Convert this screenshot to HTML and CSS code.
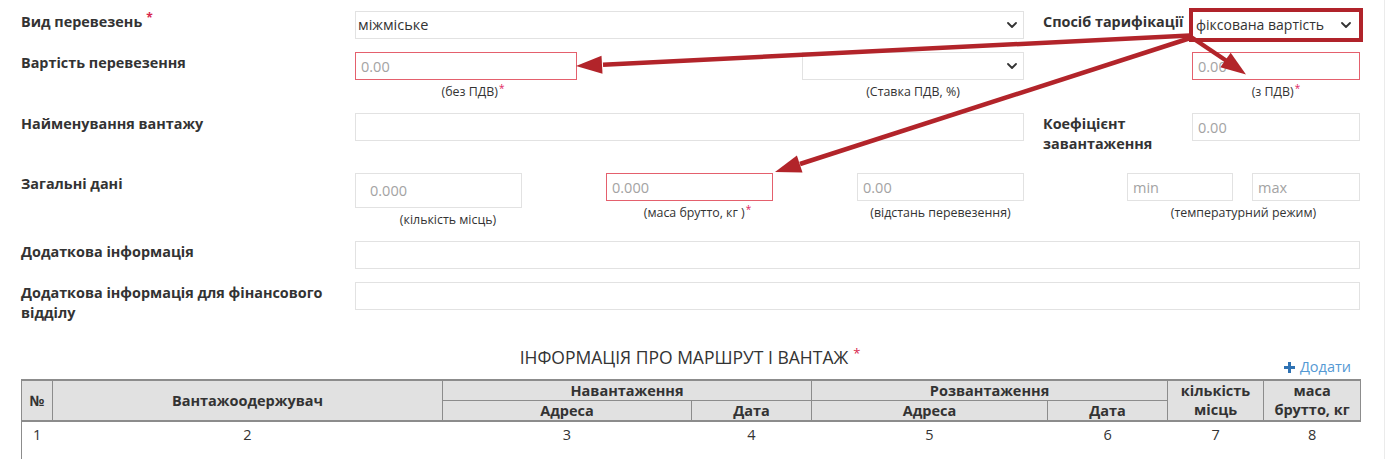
FILE: index.html
```html
<!DOCTYPE html>
<html lang="uk">
<head>
<meta charset="utf-8">
<title>Інформація про перевезення</title>
<link rel="stylesheet" href="styles.css">
</head>
<body>
<div class="page">
  <div class="form">
    <div class="row r1">
      <div class="label">Вид перевезень<span class="req">*</span></div>
      <div class="main">
        <div class="select w669"><span>міжміське</span><svg class="chev" viewBox="0 0 10 6" width="10" height="6"><polyline points="1,1 5,5 9,1"/></svg></div>
        <div class="label side">Спосіб тарифікації</div>
        <div class="select w168 marked"><span>фіксована вартість</span><svg class="chev" viewBox="0 0 10 6" width="10" height="6"><polyline points="1,1 5,5 9,1"/></svg></div>
      </div>
    </div>

    <div class="row r2">
      <div class="label">Вартість перевезення</div>
      <div class="main">
        <div class="field w222">
          <input class="ctl err" type="text" placeholder="0.00">
          <div class="cap shift14">(без ПДВ)<span class="creq">*</span></div>
        </div>
        <div class="field w222 ml225">
          <div class="select"><span></span><svg class="chev" viewBox="0 0 10 6" width="10" height="6"><polyline points="1,1 5,5 9,1"/></svg></div>
          <div class="cap">(Ставка ПДВ, %)</div>
        </div>
        <div class="field w168 ml168">
          <input class="ctl err" type="text" placeholder="0.00">
          <div class="cap">(з ПДВ)<span class="creq">*</span></div>
        </div>
      </div>
    </div>

    <div class="row r3">
      <div class="label">Найменування вантажу</div>
      <div class="main">
        <input class="ctl w669" type="text">
        <div class="label side">Коефіцієнт завантаження</div>
        <input class="ctl w168" type="text" placeholder="0.00">
      </div>
    </div>

    <div class="row r4">
      <div class="label">Загальні дані</div>
      <div class="main">
        <div class="field w186">
          <input class="ctl tall w167" type="text" placeholder="0.000">
          <div class="cap">(кількість місць)</div>
        </div>
        <div class="field w167 ml65">
          <input class="ctl err" type="text" placeholder="0.000">
          <div class="cap shift16">(маса брутто, кг )<span class="creq">*</span></div>
        </div>
        <div class="field w167 ml84">
          <input class="ctl" type="text" placeholder="0.00">
          <div class="cap">(відстань перевезення)</div>
        </div>
        <div class="field w233 ml103">
          <div class="pair">
            <input class="ctl w106" type="text" placeholder="min">
            <input class="ctl w108" type="text" placeholder="max">
          </div>
          <div class="cap">(температурний режим)</div>
        </div>
      </div>
    </div>

    <div class="row r5">
      <div class="label">Додаткова інформація</div>
      <div class="main">
        <input class="ctl full" type="text">
      </div>
    </div>

    <div class="row r6">
      <div class="label">Додаткова інформація для фінансового відділу</div>
      <div class="main">
        <input class="ctl full" type="text">
      </div>
    </div>
  </div>

  <h2 class="title">ІНФОРМАЦІЯ ПРО МАРШРУТ І ВАНТАЖ<span class="treq">*</span></h2>
  <div class="add-row"><a class="add" href="#"><svg class="plus" viewBox="0 0 11 11" width="11" height="11"><path d="M4 0h3v4h4v3h-4v4h-3v-4h-4v-3h4z"/></svg>Додати</a></div>

  <table class="route">
    <colgroup>
      <col style="width:31px"><col style="width:390px"><col style="width:249px"><col style="width:120px"><col style="width:236px"><col style="width:120px"><col style="width:96px"><col style="width:97px">
    </colgroup>
    <thead>
      <tr>
        <th rowspan="2">№</th>
        <th rowspan="2">Вантажоодержувач</th>
        <th colspan="2">Навантаження</th>
        <th colspan="2">Розвантаження</th>
        <th rowspan="2">кількість<br>місць</th>
        <th rowspan="2">маса<br>брутто, кг</th>
      </tr>
      <tr>
        <th>Адреса</th>
        <th>Дата</th>
        <th>Адреса</th>
        <th>Дата</th>
      </tr>
    </thead>
    <tbody>
      <tr>
        <td class="num">1</td><td>2</td><td>3</td><td>4</td><td>5</td><td>6</td><td>7</td><td>8</td>
      </tr>
    </tbody>
  </table>

  <svg class="arrows" viewBox="0 0 1385 459" width="1385" height="459">
    <line x1="1190" y1="35.5" x2="603" y2="64.7"/>
    <polygon points="576,66 601.5,55.7 602.5,73.7"/>
    <line x1="1192" y1="37.5" x2="800" y2="164"/>
    <polygon points="775,172 796.9,155.4 802.5,172.6"/>
    <line x1="1191" y1="37" x2="1226" y2="60.5"/>
    <polygon points="1246,74.5 1230.7,52.7 1220.3,67.3"/>
  </svg>
</div>
</body>
</html>
```

FILE: styles.css
```css
* { box-sizing: border-box; }

body {
  margin: 0;
  background: #fff;
  font-family: "Open Sans", "Liberation Sans", sans-serif;
  font-size: 14px;
  color: #333;
}

.page {
  position: relative;
  width: 1385px;
  height: 459px;
  overflow: hidden;
  padding: 11px 25px 0 21px;
  border-right: 1px solid #ebebeb;
}

.row {
  display: grid;
  grid-template-columns: 334px 1005px;
}

.r1 { margin-bottom: 13px; }
.r2 { margin-bottom: 13px; }
.r3 { margin-bottom: 19px; }
.r4 { margin-bottom: 13px; }
.r5 { margin-bottom: 13px; }

.label {
  font-weight: 700;
  font-size: 14.4px;
  line-height: 20px;
  padding-top: 1px;
}

.label.side {
  width: 149px;
  margin-left: 19px;
}

.req {
  color: #d7264d;
  font-size: 12px;
  position: relative;
  top: -5px;
  margin-left: 4px;
}

.main {
  display: flex;
  align-items: flex-start;
}

.field {
  display: flex;
  flex-direction: column;
  align-items: flex-start;
}

.field > .ctl,
.field > .select { width: 100%; }
.field > .tall { width: 167px; }

.w669 { width: 669px; }
.w222 { width: 222px; }
.w168 { width: 168px; }
.w186 { width: 186px; }
.w167 { width: 167px; }
.w233 { width: 233px; }
.w106 { width: 106px; }
.w108 { width: 108px; }
.full { width: 1005px; }

.ml225 { margin-left: 225px; }
.ml168 { margin-left: 168px; }
.ml65 { margin-left: 65px; }
.ml84 { margin-left: 84px; }
.ml103 { margin-left: 103px; }

.ctl {
  display: block;
  height: 28px;
  margin: 0;
  padding: 0 5px;
  border: 1px solid #e2e2e2;
  border-radius: 0;
  background: #fff;
  font-family: inherit;
  font-size: 14.5px;
  color: #333;
  outline: none;
}

.ctl::placeholder { color: #a3a3a3; }

.ctl.err { border-color: #e4606d; }

.ctl.tall {
  height: 35px;
  padding: 0 14px;
}

.pair {
  display: flex;
  gap: 19px;
}

.select {
  height: 28px;
  border: 1px solid #e2e2e2;
  background: #fff;
  display: flex;
  align-items: center;
  justify-content: space-between;
  padding: 0 6px 0 2px;
  line-height: 26px;
  font-size: 14.5px;
  color: #333;
}

.select.marked {
  outline: 4px solid #b0232a;
  outline-offset: -1px;
  padding: 0 8px 0 3px;
  font-size: 14px;
}

.chev {
  flex: none;
  fill: none;
  stroke: #333;
  stroke-width: 1.8;
  stroke-linecap: round;
  stroke-linejoin: round;
}

.cap {
  width: 100%;
  margin-top: 4px;
  font-size: 12.4px;
  line-height: 16px;
  text-align: center;
  white-space: nowrap;
}

.cap.shift14 { padding-left: 14px; }
.cap.shift16 { padding-left: 16px; }

.creq {
  color: #e0245e;
  font-size: 10px;
  position: relative;
  top: -4px;
  margin-left: 1px;
}

.title {
  margin: 23px 0 0;
  font-size: 17.5px;
  font-weight: 400;
  line-height: 22px;
  text-align: center;
  color: #333;
}

.treq {
  color: #d7264d;
  font-size: 13px;
  position: relative;
  top: -6px;
  margin-left: 5px;
}

.add-row {
  margin-top: -13px;
  line-height: 20px;
  text-align: right;
  padding-right: 8px;
}

.add {
  display: inline-flex;
  align-items: center;
  gap: 5px;
  color: #5499d4;
  text-decoration: none;
  font-size: 14.5px;
}

.plus { fill: #2f72b3; }

.route {
  margin-top: 1px;
  width: 1339px;
  border-collapse: collapse;
  table-layout: fixed;
  font-size: 14.5px;
}

.route th {
  background: #e1e1e1;
  border: 1px solid #8c8c8c;
  font-weight: 700;
  line-height: 19px;
  padding: 0;
  text-align: center;
  vertical-align: middle;
}

.route thead tr:first-child th { border-top: 2px solid #8c8c8c; }
.route thead tr:last-child th,
.route thead th[rowspan] { border-bottom: 2px solid #8c8c8c; }

.route td {
  height: 40px;
  padding: 3px 0 0;
  line-height: 20px;
  text-align: center;
  vertical-align: top;
}

.route td.num {
  text-align: left;
  padding-left: 11px;
  border-left: 1px solid #8c8c8c;
}

.arrows {
  position: absolute;
  top: 0;
  left: 0;
  pointer-events: none;
}

.arrows line {
  stroke: #b2242a;
  stroke-width: 4.5;
}

.arrows polygon { fill: #b2242a; }
```
